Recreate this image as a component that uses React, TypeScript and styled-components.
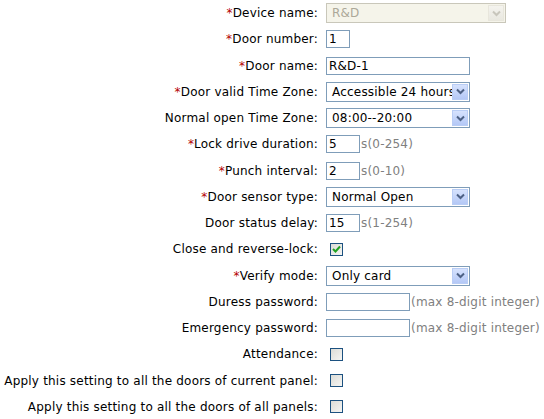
import React from 'react';
import styled, { createGlobalStyle } from 'styled-components';

const GlobalStyle = createGlobalStyle`
  body {
    margin: 0;
    background: #ffffff;
    font-family: "DejaVu Sans", Verdana, sans-serif;
    font-size: 12px;
    letter-spacing: 0.2px;
    color: #000000;
  }
`;

type Field =
  | { kind: 'select'; value: string; width: number; disabled?: boolean }
  | { kind: 'input'; value: string; width: number; hint?: string }
  | { kind: 'check'; checked: boolean };

interface Row {
  label: string;
  required?: boolean;
  field: Field;
}

const rows: Row[] = [
  { label: 'Device name:', required: true, field: { kind: 'select', value: 'R&D', width: 180, disabled: true } },
  { label: 'Door number:', required: true, field: { kind: 'input', value: '1', width: 24 } },
  { label: 'Door name:', required: true, field: { kind: 'input', value: 'R&D-1', width: 144 } },
  { label: 'Door valid Time Zone:', required: true, field: { kind: 'select', value: 'Accessible 24 hours', width: 144 } },
  { label: 'Normal open Time Zone:', field: { kind: 'select', value: '08:00--20:00', width: 144 } },
  { label: 'Lock drive duration:', required: true, field: { kind: 'input', value: '5', width: 34, hint: 's(0-254)' } },
  { label: 'Punch interval:', required: true, field: { kind: 'input', value: '2', width: 34, hint: 's(0-10)' } },
  { label: 'Door sensor type:', required: true, field: { kind: 'select', value: 'Normal Open', width: 144 } },
  { label: 'Door status delay:', field: { kind: 'input', value: '15', width: 34, hint: 's(1-254)' } },
  { label: 'Close and reverse-lock:', field: { kind: 'check', checked: true } },
  { label: 'Verify mode:', required: true, field: { kind: 'select', value: 'Only card', width: 144 } },
  { label: 'Duress password:', field: { kind: 'input', value: '', width: 84, hint: '(max 8-digit integer)' } },
  { label: 'Emergency password:', field: { kind: 'input', value: '', width: 84, hint: '(max 8-digit integer)' } },
  { label: 'Attendance:', field: { kind: 'check', checked: false } },
  { label: 'Apply this setting to all the doors of current panel:', field: { kind: 'check', checked: false } },
  { label: 'Apply this setting to all the doors of all panels:', field: { kind: 'check', checked: false } },
];

const Arrow: React.FC<{ disabled?: boolean }> = ({ disabled }) => (
  <svg width="9" height="7" viewBox="0 0 9 7">
    <path
      d="M1 1.5 L4.5 5 L8 1.5"
      fill="none"
      stroke={disabled ? '#c8c6bc' : '#4d6185'}
      strokeWidth="2"
    />
  </svg>
);

const Tick: React.FC = () => (
  <svg width="9" height="9" viewBox="0 0 9 9">
    <path d="M1 4 L3.5 6.5 L8 1.5" fill="none" stroke="#21a121" strokeWidth="2" />
  </svg>
);

const renderField = (f: Field) => {
  if (f.kind === 'select') {
    return (
      <SelectBox $width={f.width} $disabled={f.disabled}>
        <SelectValue $disabled={f.disabled}>{f.value}</SelectValue>
        <ArrowButton $disabled={f.disabled}>
          <Arrow disabled={f.disabled} />
        </ArrowButton>
      </SelectBox>
    );
  }
  if (f.kind === 'input') {
    return (
      <>
        <TextBox $width={f.width}>{f.value}</TextBox>
        {f.hint && <Hint>{f.hint}</Hint>}
      </>
    );
  }
  return <CheckBox>{f.checked && <Tick />}</CheckBox>;
};

const App: React.FC = () => (
  <>
    <GlobalStyle />
    <Form>
      {rows.map((r) => (
        <React.Fragment key={r.label}>
          <Label>
            {r.required && <Star>*</Star>}
            {r.label}
          </Label>
          <Cell>{renderField(r.field)}</Cell>
        </React.Fragment>
      ))}
    </Form>
  </>
);

const Form = styled.div`
  display: grid;
  grid-template-columns: 318px auto;
  grid-auto-rows: 26.25px;
  column-gap: 8px;
  align-items: center;
`;

const Label = styled.div`
  text-align: right;
  white-space: nowrap;
`;

const Star = styled.span`
  color: #b40000;
`;

const Cell = styled.div`
  display: flex;
  align-items: center;
`;

const SelectBox = styled.div<{ $width: number; $disabled?: boolean }>`
  box-sizing: border-box;
  width: ${(p) => p.$width}px;
  height: 20px;
  display: flex;
  align-items: center;
  border: 1px solid ${(p) => (p.$disabled ? '#c9c7ba' : '#7f9db9')};
  background: ${(p) => (p.$disabled ? '#f5f4ea' : '#ffffff')};
  padding: 1px;
  overflow: hidden;
`;

const SelectValue = styled.span<{ $disabled?: boolean }>`
  flex: 1;
  min-width: 0;
  overflow: hidden;
  white-space: nowrap;
  padding-left: 4px;
  color: ${(p) => (p.$disabled ? '#aca899' : '#000000')};
`;

const ArrowButton = styled.div<{ $disabled?: boolean }>`
  box-sizing: border-box;
  width: 16px;
  height: 16px;
  display: flex;
  align-items: center;
  justify-content: center;
  border: 1px solid ${(p) => (p.$disabled ? '#e8e6dc' : '#b9cdf5')};
  background: ${(p) =>
    p.$disabled
      ? 'linear-gradient(#f4f3ee, #e9e8e0)'
      : 'linear-gradient(#d6e2fd, #b4c8f6)'};
`;

const TextBox = styled.div<{ $width: number }>`
  box-sizing: border-box;
  width: ${(p) => p.$width}px;
  height: 18px;
  border: 1px solid #7f9db9;
  background: #ffffff;
  padding: 0 2px;
  line-height: 16px;
  white-space: nowrap;
  overflow: hidden;
`;

const Hint = styled.span`
  color: #808080;
  margin-left: 1px;
`;

const CheckBox = styled.div`
  box-sizing: border-box;
  width: 13px;
  height: 13px;
  margin-left: 4px;
  border: 1px solid #1c5180;
  background: linear-gradient(135deg, #dcdcd7, #f5f5f3);
  display: flex;
  align-items: center;
  justify-content: center;
`;

export default App;
